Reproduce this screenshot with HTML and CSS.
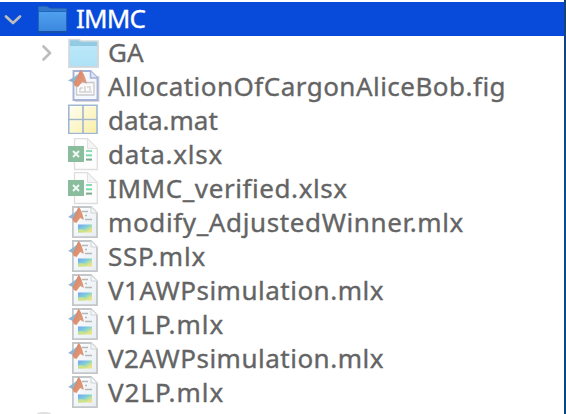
FILE: index.html
```
<!DOCTYPE html>
<html lang="en">
<head>
<meta charset="utf-8">
<title>IMMC</title>
<link rel="stylesheet" href="styles.css">
</head>
<body>
<svg class="defs" aria-hidden="true">
  <defs>
    <linearGradient id="blueFolder" x2="0" y2="1"><stop stop-color="#4fa0ee"/><stop offset="1" stop-color="#3b87df"/></linearGradient>
    <linearGradient id="paleFolder" x2="0" y2="1"><stop stop-color="#bce8fa"/><stop offset="1" stop-color="#aee1f6"/></linearGradient>
    <linearGradient id="paper" x2="1" y2="1"><stop stop-color="#fff"/><stop offset="1" stop-color="#e6edf2"/></linearGradient>
    <linearGradient id="cell" x2="1" y2="1"><stop stop-color="#fffef0"/><stop offset="1" stop-color="#fbefa5"/></linearGradient>
    <linearGradient id="plot" x2="1" y2="1"><stop stop-color="#7e9cf0"/><stop offset=".4" stop-color="#78cddd"/><stop offset=".75" stop-color="#d8e58b"/><stop offset="1" stop-color="#ffdc78"/></linearGradient>
    <linearGradient id="peak" x2="1" y2=".7"><stop stop-color="#9b6872"/><stop offset=".4" stop-color="#df8c68"/><stop offset="1" stop-color="#dc9c83"/></linearGradient>
    <symbol id="membrane" viewBox="0 0 17 17" preserveAspectRatio="none">
      <path d="M0 10 5 7 9 4 12 0 9 11 6 13 3 11Z" fill="#8fb4d1"/>
      <path d="M5 12 8 7 11 0Q14 1 17 13L13 11 9 16 6 15Z" fill="url(#peak)"/>
    </symbol>
    <symbol id="mlx" viewBox="0 0 34 34">
      <path d="M5.9 1H24L30 7V31.2H5.9Z" fill="url(#paper)" stroke="#c3c7ca" stroke-width="1.8"/>
      <path d="M24 1V7H30" fill="#f5f7f8" stroke="#d0d3d6"/>
      <path d="M15 5.5H21M18 9.5H20M18 13.5H25" stroke="#b5b7b9" stroke-width="1.6"/>
      <path d="M11 18.5H25V26.5H11Z" fill="url(#plot)"/>
      <path d="M11 23.5 15 23 18 25 17 26.5H11Z" fill="#dce57c" opacity=".75"/>
      <use href="#membrane" x="1" y="1" width="16" height="17"/>
    </symbol>
    <symbol id="xlsx" viewBox="0 0 34 34">
      <path d="M7.5 .7H20.5L30.3 10.5V31.5H7.5Z" fill="#fdfdfd" stroke="#dedede" stroke-width="1.3"/>
      <path d="M20.5 .7V10.5H30.3Z" fill="#f5f5f5" stroke="#e0e0e0"/>
      <path d="M19 13H25" stroke="#8edbb3" stroke-width="2"/>
      <path d="M19 17.3H25" stroke="#72dfa7" stroke-width="2"/>
      <path d="M19 21.6H25" stroke="#7ba98f" stroke-width="2"/>
      <path d="M1 8H17V24H1Z" fill="#8abd9d"/>
      <path d="M6 13 12 19M12 13 6 19" stroke="#eff8f2" stroke-width="2"/>
    </symbol>
  </defs>
</svg>
<main class="panel">
  <ul class="tree">
    <li class="row root"><svg class="chevron" viewBox="0 0 18 18"><path d="M2 6.5 9 13 16 6.5"/></svg><svg class="icon" viewBox="0 0 34 34"><path d="M2 5Q2 4 3 4H11L14 6H30Q31 6 31 7V29Q31 30 30 30H3Q2 30 2 29Z" fill="#3178cd" stroke="#1551b6"/><path d="M3 10H30V29H3Z" fill="url(#blueFolder)"/><path d="M3 9.5H30" stroke="#2265bd"/><path d="M2 30H31" stroke="#1750a9" stroke-width="2"/></svg><span class="name n-root">IMMC</span></li>
    <li class="row child"><svg class="chevron" viewBox="0 0 18 18"><path d="M5.5 2.5 12 9 5.5 15.5"/></svg><svg class="icon" viewBox="0 0 34 34"><path d="M2 3.5H12L14 5H31V31H2Z" fill="#93cbe4" stroke="#d5dbde" stroke-width="1.7"/><path d="M3 10H30V30H3Z" fill="url(#paleFolder)"/><path d="M3 9.5H30" stroke="#8fc8df"/><path d="M1 31H31V7" fill="none" stroke="#d3d8da" stroke-width="1.7"/></svg><span class="name n-ga">GA</span></li>
    <li class="row file"><svg class="icon" viewBox="0 0 34 34"><path d="M8 6H32.5V32H8Z" fill="#dcd6da"/><path d="M6.5 1H23.5L30.5 8V30H6.5Z" fill="#f5f8ff" stroke="#a6b3d6" stroke-width="1.9"/><path d="M23.5 1V8H30.5" fill="#dce4f8" stroke="#a6b3d6" stroke-width="1.5"/><path d="M9.5 12.5H27V25H9.5Z" fill="#fafafa" stroke="#c9c9cb" stroke-width="1.3"/><path d="M13 21V18M18 22V16M23 21V18M13 18H16M20 17H24M12 22H25" stroke="#c2c2c4"/><use href="#membrane" x="1" y="0" width="19" height="18"/></svg><span class="name n-fig">AllocationOfCargonAliceBob.fig</span></li>
    <li class="row file"><svg class="icon" viewBox="0 0 34 34"><path d="M1.8 1.3H30V29.3H1.8Z" fill="#fff" stroke="#9fb7d0" stroke-width="1.6"/><path d="M3 2.5H15V14.5H3ZM17 2.5H29V14.5H17ZM3 16.5H15V28.5H3ZM17 16.5H29V28.5H17Z" fill="url(#cell)"/><path d="M16 2V29M2 15.5H30" stroke="#a5b7c2" stroke-width="1.7"/></svg><span class="name n-mat">data.mat</span></li>
    <li class="row file"><svg class="icon"><use href="#xlsx"/></svg><span class="name n-data">data.xlsx</span></li>
    <li class="row file"><svg class="icon"><use href="#xlsx"/></svg><span class="name n-ver">IMMC_verified.xlsx</span></li>
    <li class="row file"><svg class="icon"><use href="#mlx"/></svg><span class="name n-mod">modify_AdjustedWinner.mlx</span></li>
    <li class="row file"><svg class="icon"><use href="#mlx"/></svg><span class="name n-ssp">SSP.mlx</span></li>
    <li class="row file"><svg class="icon"><use href="#mlx"/></svg><span class="name n-sim">V1AWPsimulation.mlx</span></li>
    <li class="row file"><svg class="icon"><use href="#mlx"/></svg><span class="name n-lp">V1LP.mlx</span></li>
    <li class="row file"><svg class="icon"><use href="#mlx"/></svg><span class="name n-sim">V2AWPsimulation.mlx</span></li>
    <li class="row file"><svg class="icon"><use href="#mlx"/></svg><span class="name n-lp">V2LP.mlx</span></li>
    <li class="next"></li>
  </ul>
  <div class="edge"></div>
</main>
</body>
</html>
```
FILE: styles.css
```
body { margin: 0; background: #fff; overflow: hidden; }
.defs { display: block; width: 0; height: 0; }
.panel { display: flex; width: 566px; height: 414px; overflow: hidden; }
.tree { flex: 1; margin: 0; padding: 2px 0 0; list-style: none; }
.edge { width: 2px; background: linear-gradient(#174275, #064f91 50%, #064784); }
.row { display: flex; align-items: center; height: 34px; color: #646464; font: 26px/34px "Noto Sans", "Open Sans", sans-serif; white-space: nowrap; -webkit-text-stroke: 0.35px currentColor; }
.root { background: #084bdb; color: #fff; padding-left: 4px; }
.child { padding-left: 38px; }
.file { padding-left: 67px; }
.chevron { width: 18px; height: 18px; margin-right: 14px; fill: none; stroke: #bdbdbd; stroke-width: 2.7; stroke-linecap: round; stroke-linejoin: round; }
.child .chevron { margin-right: 11px; }
.icon { flex: none; width: 34px; height: 34px; }
.name { margin-left: 7px; padding-bottom: 2px; }
.root .name { margin-left: 6px; }
.n-root { letter-spacing: -0.8px; }
.n-fig { letter-spacing: 0.48px; }
.n-data { letter-spacing: 0.75px; }
.n-ver { letter-spacing: 0.58px; }
.n-mod { letter-spacing: 0.62px; }
.n-ssp { letter-spacing: 0.75px; }
.n-sim { letter-spacing: 0.5px; }
.n-lp { letter-spacing: 1px; }
.next { width: 14px; height: 4px; margin: 2px 0 0 37px; border-radius: 50% 50% 0 0; background: #dedede; }
```
